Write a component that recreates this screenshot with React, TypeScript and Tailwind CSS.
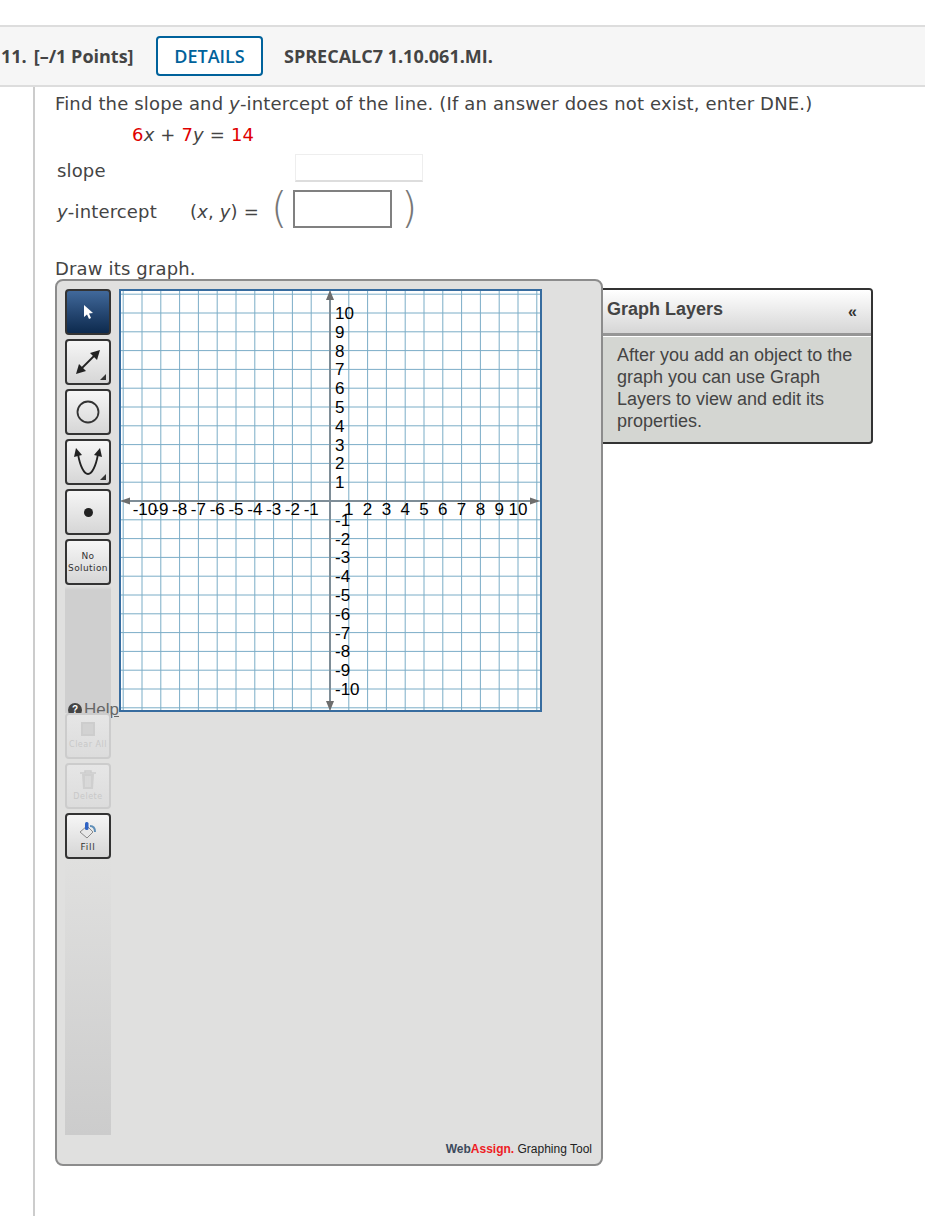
const AXIS_X = 211;
const AXIS_Y = 212;
const STEP = 18.8;
const ticks = Array.from({ length: 23 }, (_, i) => i - 11);
const labels = ticks.filter((t) => t !== 0 && Math.abs(t) <= 10);

function GraphGrid() {
  return (
    <svg width="423" height="423" viewBox="0 0 423 423" className="relative block shrink-0">
      <rect x="0" y="0" width="423" height="423" fill="#ffffff" />
      {ticks.map((t) => (
        <g key={t} stroke="#7badc7" strokeWidth="1">
          <line x1={AXIS_X + t * STEP} y1="2" x2={AXIS_X + t * STEP} y2="421" />
          <line x1="2" y1={AXIS_Y + t * STEP} x2="421" y2={AXIS_Y + t * STEP} />
        </g>
      ))}
      <rect x="1" y="1" width="421" height="421" fill="none" stroke="#376c9f" strokeWidth="2" />
      <line x1={AXIS_X} y1="4" x2={AXIS_X} y2="419" stroke="#7e8d97" strokeWidth="2" />
      <line x1="4" y1={AXIS_Y} x2="419" y2={AXIS_Y} stroke="#7e8d97" strokeWidth="2" />
      <polygon points="211,1 207,11 215,11" fill="#6d6d6d" />
      <polygon points="211,422 207,412 215,412" fill="#6d6d6d" />
      <polygon points="1,212 11,208.5 11,215.5" fill="#6d6d6d" />
      <polygon points="421,212 411,208.5 411,215.5" fill="#6d6d6d" />
      <g fontFamily="'Liberation Sans', Arial, sans-serif" fontSize="17" fill="#000000">
        {labels.map((t) => (
          <text key={`x${t}`} x={AXIS_X + t * STEP + (t === -10 ? 3 : 0)} y="226" textAnchor="middle">
            {t}
          </text>
        ))}
        {labels.map((t) => (
          <text key={`y${t}`} x="216" y={AXIS_Y - t * STEP + 6}>
            {t}
          </text>
        ))}
      </g>
    </svg>
  );
}

function ToolButton({ children, active, disabled }: { children: React.ReactNode; active?: boolean; disabled?: boolean }) {
  let tone = 'border-[#333333] bg-gradient-to-b from-[#f6f6f6] to-[#d6d6d6]';
  if (active) tone = 'border-[#333333] bg-gradient-to-b from-[#41699b] to-[#0d2a4e]';
  if (disabled) tone = 'border-[#cccccc] bg-gradient-to-b from-[#e6e6e6] to-[#dcdcdc]';
  return (
    <div className={`relative flex h-[46px] w-[46px] flex-col items-center justify-center rounded-[4px] border-2 ${tone}`}>
      {children}
    </div>
  );
}

function Corner() {
  return (
    <svg width="6" height="6" viewBox="0 0 6 6" className="absolute bottom-[3px] right-[3px]">
      <polygon points="6,0 6,6 0,6" fill="#333333" />
    </svg>
  );
}

function Toolbar() {
  return (
    <div className="flex w-[46px] shrink-0 flex-col">
      <div className="flex h-[424px] flex-col gap-1 bg-gradient-to-b from-[#e0e0df] from-[70%] to-[#cfcfcf] to-[71%]">
        <ToolButton active>
          <svg width="14" height="16" viewBox="0 0 14 16">
            <polygon points="3,1 3,13 6,10.5 8,15 10,14 8,9.5 12,9" fill="#ffffff" />
          </svg>
        </ToolButton>
        <ToolButton>
          <svg width="28" height="28" viewBox="0 0 28 28">
            <line x1="5" y1="23" x2="23" y2="5" stroke="#222222" strokeWidth="1.8" />
            <polygon points="26,2 16,5 23,12" fill="#222222" />
            <polygon points="2,26 5,16 12,23" fill="#222222" />
          </svg>
          <Corner />
        </ToolButton>
        <ToolButton>
          <svg width="26" height="26" viewBox="0 0 26 26">
            <circle cx="13" cy="13" r="10.5" fill="none" stroke="#333333" strokeWidth="1.8" />
          </svg>
        </ToolButton>
        <ToolButton>
          <svg width="32" height="32" viewBox="0 0 32 32">
            <path d="M6 8 C8 20 12 28 16 28 C20 28 24 20 26 8" fill="none" stroke="#222222" strokeWidth="1.8" />
            <polygon points="4,2 2,11 10,9" fill="#222222" />
            <polygon points="28,2 22,9 30,11" fill="#222222" />
          </svg>
          <Corner />
        </ToolButton>
        <ToolButton>
          <span className="block h-[9px] w-[9px] rounded-full bg-[#222222]" />
        </ToolButton>
        <ToolButton>
          <span className="text-center font-['DejaVu_Sans',sans-serif] text-[9px] leading-[12px] tracking-[0.4px] text-[#333333]">
            No
            <br />
            Solution
          </span>
        </ToolButton>
      </div>
      <div className="flex flex-col gap-1">
        <ToolButton disabled>
          <span className="mb-[4px] block h-[14px] w-[14px] border-2 border-[#cdcdcd] bg-[#d2d2d2]" />
          <span className="whitespace-nowrap font-['DejaVu_Sans',sans-serif] text-[8px] leading-[10px] tracking-[0.5px] text-[#c8c8c8]">
            Clear All
          </span>
        </ToolButton>
        <ToolButton disabled>
          <svg width="18" height="20" viewBox="0 0 18 20" className="mb-[2px]">
            <path d="M1 3 H17 M6 3 V1 H12 V3" fill="none" stroke="#cccccc" strokeWidth="1.5" />
            <path d="M3 4 H15 L14 19 H4 Z" fill="#cfcfcf" />
            <path d="M7 6 V17 M9 6 V17 M11 6 V17" stroke="#e2e2e2" strokeWidth="1" />
          </svg>
          <span className="font-['DejaVu_Sans',sans-serif] text-[8px] leading-[10px] tracking-[0.5px] text-[#c8c8c8]">
            Delete
          </span>
        </ToolButton>
        <ToolButton>
          <svg width="18" height="18" viewBox="0 0 18 18" className="mb-[3px]">
            <polygon points="1,11 8,5 14,11 8,17" fill="#e8e8e8" stroke="#8a8a8a" strokeWidth="1" />
            <rect x="6" y="1" width="3.5" height="8" rx="1.5" fill="#2f63c4" />
            <path d="M11 5 C15 5 16 8 16 11" fill="none" stroke="#5f8fb8" strokeWidth="2" />
          </svg>
          <span className="font-['DejaVu_Sans',sans-serif] text-[9px] leading-[10px] tracking-[0.8px] text-[#333333]">
            Fill
          </span>
        </ToolButton>
      </div>
      <div className="h-[276px] bg-gradient-to-b from-[#e0e0df] to-[#cccccc]" />
    </div>
  );
}

function GraphTool() {
  return (
    <div className="relative flex h-[887px] w-[548px] shrink-0 flex-col rounded-lg border-2 border-[#8c8c8c] bg-[#e0e0df] pl-2 pr-[9px] pt-2">
      {/* sits under the buttons and the grid, as in the real tool */}
      <div className="absolute left-[11px] top-[420px] flex items-center gap-[2px] font-['Liberation_Sans',Arial,sans-serif] text-[17px] leading-[18px] text-[#666666]">
        <span className="flex h-[14px] w-[14px] items-center justify-center rounded-full bg-[#444444] text-[10px] font-bold text-white">
          ?
        </span>
        <span className="underline">Help</span>
      </div>
      <div className="flex gap-2">
        <Toolbar />
        <GraphGrid />
      </div>
      <div className="mt-[5px] text-right font-['Liberation_Sans',Arial,sans-serif] text-[12px] leading-[18px] text-[#222222]">
        <span className="font-bold text-[#3c4a5c]">Web</span>
        <span className="font-bold text-[#ee1c25]">Assign.</span> Graphing Tool
      </div>
    </div>
  );
}

function LayersPanel() {
  return (
    <div className="mt-[9px] h-[156px] w-[270px] overflow-hidden rounded-r-[4px] border-2 border-l-0 border-[#333333] bg-[#d4d6d2] font-['Liberation_Sans',Arial,sans-serif] text-[#444444]">
      <div className="flex h-[46px] items-center justify-between border-b-[3px] border-[#969696] bg-gradient-to-b from-[#ffffff] to-[#d6d6d6] pb-1 pl-1 pr-[14px]">
        <span className="text-[18px] font-bold">Graph Layers</span>
        <span className="mt-[4px] text-[16px] font-bold text-[#333333]">«</span>
      </div>
      <div className="border-t border-white px-[14px] pt-[7px] text-[18px] leading-[22px]">
        After you add an object to the graph you can use Graph Layers to view and edit its properties.
      </div>
    </div>
  );
}

export default function App() {
  return (
    <div className="h-[1216px] overflow-hidden bg-white font-['DejaVu_Sans',sans-serif] text-[18px] tracking-[0.16px] text-[#444444]">
      <div className="h-[25px]" />
      <div className="flex h-[62px] items-center border-y-2 border-[#dddddd] bg-[#f6f6f6] pl-px font-['Open_Sans',sans-serif] text-[18px] font-bold tracking-normal">
        <span className="flex w-[155px] gap-[7px]">
          <span>11.</span>
          <span>[–/1 Points]</span>
        </span>
        <span className="flex h-[40px] w-[107px] items-center justify-center rounded-[4px] border-2 border-[#00629b] bg-white font-semibold text-[#00629b]">
          DETAILS
        </span>
        <span className="ml-[21px]">SPRECALC7 1.10.061.MI.</span>
      </div>
      <div className="ml-[33px] h-[1129px] border-l-2 border-[#cccccc] pl-5 pt-[5px]">
        <p className="leading-[24px]">
          Find the slope and <i>y</i>-intercept of the line. (If an answer does not exist, enter DNE.)
        </p>
        <p className="ml-[77px] mt-[7px] leading-[24px]">
          <span className="text-[#e00000]">6</span>
          <i>x</i> + <span className="text-[#e00000]">7</span>
          <i>y</i> = <span className="text-[#e00000]">14</span>
        </p>
        <div className="ml-[2px] mt-[7px] flex h-[28px] items-center">
          <span className="mt-[4px] w-[238px]">slope</span>
          <span className="h-[28px] w-[128px] border border-b-2 border-[#eeeeee] border-b-[#dddddd] bg-white" />
        </div>
        <div className="ml-[2px] mt-[8px] flex h-[38px] items-center">
          <span className="mt-[5px] w-[133px]">
            <i>y</i>-intercept
          </span>
          <span className="mt-[5px] w-[81px] whitespace-nowrap">
            (<i>x</i>, <i>y</i>) =
          </span>
          <span className="w-[20px] text-[42px] font-thin leading-[38px] text-[#777777]">(</span>
          <span className="ml-[2px] h-[38px] w-[99px] border-2 border-[#808080] bg-white" />
          <span className="ml-[9px] text-[42px] font-thin leading-[38px] text-[#777777]">)</span>
        </div>
        <p className="mt-[29px] leading-[24px]">Draw its graph.</p>
        <div className="mt-[-2px] flex tracking-normal">
          <GraphTool />
          <LayersPanel />
        </div>
      </div>
    </div>
  );
}
